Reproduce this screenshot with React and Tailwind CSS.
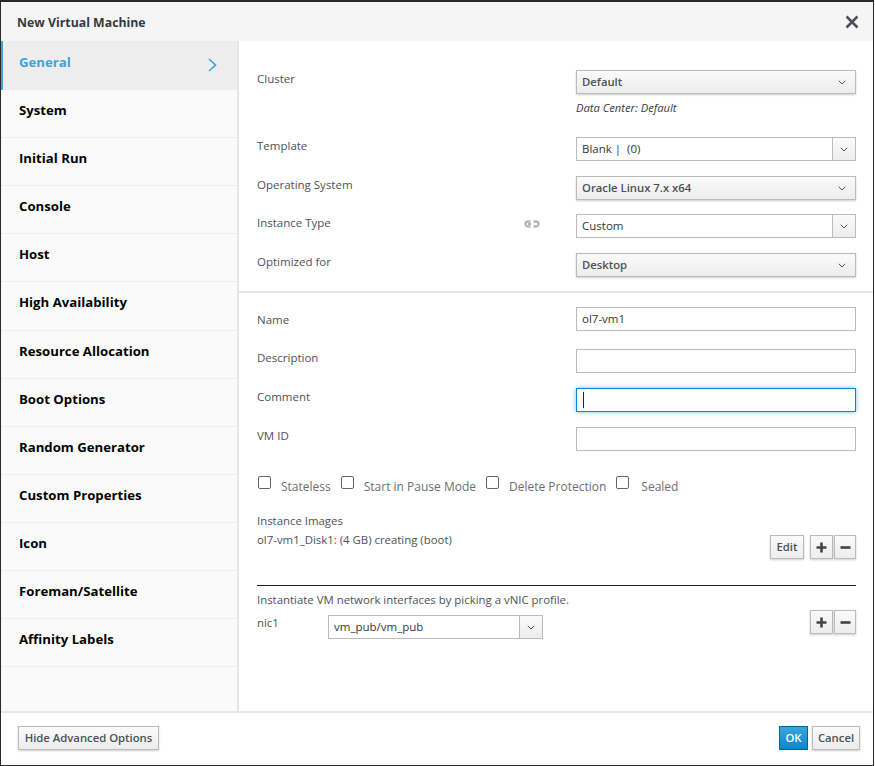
import React from "react";

const sideItems = [
  "System",
  "Initial Run",
  "Console",
  "Host",
  "High Availability",
  "Resource Allocation",
  "Boot Options",
  "Random Generator",
  "Custom Properties",
  "Icon",
  "Foreman/Satellite",
  "Affinity Labels",
];

const Caret = () => (
  <svg width="8" height="5" viewBox="0 0 8 5" fill="none" stroke="#4d5258" strokeWidth="1">
    <path d="M0.8 0.8 L4 4 L7.2 0.8" />
  </svg>
);

// plain gradient dropdown button
const SelectButton = ({ value }) => (
  <div className="flex h-6 w-[280px] items-center justify-between border border-[#bbbbbb] bg-gradient-to-b from-[#fafafa] to-[#ededed] pl-[5px] pr-[9px] text-[11.3px] font-semibold text-[#4d5258] shadow-[0_1px_2px_rgba(0,0,0,0.2)]">
    <span>{value}</span>
    <Caret />
  </div>
);

// text box with the small arrow button on the right
const Combo = ({ value, width }) => (
  <div className={`flex h-6 items-stretch border border-[#bbbbbb] bg-white text-[11.5px] text-[#363636] ${width}`}>
    <span className="flex flex-1 items-center whitespace-pre pl-[5px]">{value}</span>
    <span className="flex w-[23px] items-center justify-center border-l border-[#bbbbbb] bg-gradient-to-b from-[#fafafa] to-[#ededed]">
      <Caret />
    </span>
  </div>
);

const TextBox = ({ value }) => (
  <div className="flex h-6 w-[280px] items-center border border-[#bbbbbb] bg-white pl-[5px] text-[11.5px] text-[#363636]">
    {value}
  </div>
);

const Row = ({ label, children, extra, className, labelClass = "pt-[1px]" }) => (
  <div className={`flex ${className}`}>
    <span className={`w-[263px] text-[11.5px] leading-[16px] text-[#4d5258] ${labelClass}`}>{label}</span>
    <div className="flex w-[56px] justify-start pl-[4px]">{extra}</div>
    <div>{children}</div>
  </div>
);

const Check = ({ label, className, gap = "ml-[10px]" }) => (
  <label className={`flex items-start ${className}`}>
    <span className="mt-[1px] h-[13px] w-[13px] rounded-[2px] border border-[#666666] bg-white"></span>
    <span className={`${gap} mt-[4px] text-[12px] leading-[16px] text-[#6a6e73]`}>{label}</span>
  </label>
);

const SmallBtn = ({ children, className }) => (
  <div
    className={`flex h-6 items-center justify-center border border-[#bbbbbb] bg-gradient-to-b from-[#fafafa] to-[#ededed] text-[11.3px] font-semibold text-[#4d5258] shadow-[0_1px_2px_rgba(0,0,0,0.2)] ${className}`}
  >
    {children}
  </div>
);

const PlusIcon = () => (
  <svg width="11" height="11" viewBox="0 0 11 11" fill="#3f454c">
    <path d="M4.2 0.5h2.6v3.7h3.7v2.6H6.8v3.7H4.2V6.8H0.5V4.2h3.7z" />
  </svg>
);

const MinusIcon = () => (
  <svg width="11" height="11" viewBox="0 0 11 11" fill="#3f454c">
    <rect x="0.5" y="4.2" width="10" height="2.6" />
  </svg>
);

const PlusMinus = () => (
  <div className="flex gap-[1px]">
    <SmallBtn className="w-[23px]">
      <PlusIcon />
    </SmallBtn>
    <SmallBtn className="w-[22px]">
      <MinusIcon />
    </SmallBtn>
  </div>
);

const LinkIcon = () => (
  <svg className="mt-[6px]" width="16" height="8" viewBox="0 0 16 8" fill="none" stroke="#b5b8bb" strokeWidth="2.4">
    <path d="M6.5 1.5H4a2.5 2.5 0 0 0 0 5h2.5" />
    <path d="M9.5 1.5H12a2.5 2.5 0 0 1 0 5H9.5" />
    <path d="M4 4h3" />
  </svg>
);

const App = () => {
  return (
    <div className="h-[766px] w-[875px] bg-white font-['Open_Sans',sans-serif]">
      <div className="flex h-[766px] w-[874px] flex-col border border-t-2 border-[#2a2a2a] bg-white">
        <div className="flex h-[39px] items-center justify-between bg-[#f5f5f5] pl-4 pr-[14px]">
          <span className="mt-[3px] text-[12.3px] font-bold text-[#363b40]">New Virtual Machine</span>
          <svg width="14" height="14" viewBox="0 0 14 14" stroke="#4d5258" strokeWidth="2.6" fill="none">
            <path d="M1.5 1.5 L12.5 12.5 M12.5 1.5 L1.5 12.5" />
          </svg>
        </div>

        <div className="flex flex-1">
          <div className="w-[239px] border-r-2 border-[#e6e6e6] bg-[#fafafa]">
            <div className="flex h-[49px] items-start justify-between border-l-2 border-[#39a5dc] bg-[#ededed] pl-[16px] pr-[20px] pt-[12px]">
              <span className="text-[13.2px] font-bold leading-[18px] text-[#39a5dc]">General</span>
              <svg className="mt-[5px]" width="9" height="14" viewBox="0 0 9 14" fill="none" stroke="#39a5dc" strokeWidth="1.6">
                <path d="M1 1 L7.5 7 L1 13" />
              </svg>
            </div>
            {sideItems.map((item) => (
              <div
                key={item}
                className="flex h-[48px] items-center border-b border-[#ededed] pb-[8px] pl-[18px] text-[13.2px] font-bold leading-[18px] text-[#030303] nth-6:h-[49px]"
              >
                {item}
              </div>
            ))}
          </div>

          <div className="flex-1">
            <div className="pl-[18px] pt-[29px]">
              <Row label="Cluster">
                <SelectButton value="Default" />
                <p className="mt-[6px] text-[11.2px] italic leading-[16px] text-[#363b40]">Data Center: Default</p>
              </Row>
              <Row label="Template" className="mt-[21px]">
                <Combo value="Blank |  (0)" width="w-[280px]" />
              </Row>
              <Row label="Operating System" className="mt-[15px]">
                <SelectButton value="Oracle Linux 7.x x64" />
              </Row>
              <Row label="Instance Type" extra={<LinkIcon />} className="mt-[14px]">
                <Combo value="Custom" width="w-[280px]" />
              </Row>
              <Row label="Optimized for" className="mt-[15px]">
                <SelectButton value="Desktop" />
              </Row>
            </div>

            <div className="mt-[14px] h-[2px] w-full bg-[#e6e6e6]"></div>

            <div className="pl-[18px] pr-[17px] pt-[14px]">
              <Row label="Name" labelClass="pt-[5px]">
                <TextBox value="ol7-vm1" />
              </Row>
              <Row label="Description" className="mt-[18px]">
                <TextBox />
              </Row>
              <Row label="Comment" className="mt-[15px]">
                <div className="flex h-6 w-[280px] items-center border border-[#0088ce] bg-white pl-[6px] shadow-[0_0_5px_rgba(0,136,206,0.5)]">
                  <span className="h-[16px] w-[1px] bg-[#222222]"></span>
                </div>
              </Row>
              <Row label="VM ID" className="mt-[15px]">
                <TextBox />
              </Row>

              <div className="mt-[24px] flex pl-[1px]">
                <Check label="Stateless" />
                <Check label="Start in Pause Mode" className="ml-[10px]" />
                <Check label="Delete Protection" className="ml-[10px]" />
                <Check label="Sealed" className="ml-[10px]" gap="ml-[12px]" />
              </div>

              <div className="mt-[16px] flex items-start justify-between">
                <div className="text-[11.4px] leading-[19px] text-[#4d5258]">
                  <div>Instance Images</div>
                  <div>ol7-vm1_Disk1: (4 GB) creating (boot)</div>
                </div>
                <div className="mt-[24px] flex gap-[6px]">
                  <SmallBtn className="w-[34px]">Edit</SmallBtn>
                  <PlusMinus />
                </div>
              </div>

              <div className="mt-[26px] h-[1px] w-full bg-[#222222]"></div>

              <div className="flex items-start justify-between">
                <div>
                  <div className="mt-[6px] text-[11.4px] leading-[16px] text-[#4d5258]">
                    Instantiate VM network interfaces by picking a vNIC profile.
                  </div>
                  <div className="mt-[7px] flex">
                    <span className="w-[71px] text-[11.4px] leading-[16px] text-[#4d5258]">nic1</span>
                    <Combo value="vm_pub/vm_pub" width="w-[215px]" />
                  </div>
                </div>
                <div className="mt-[24px]">
                  <PlusMinus />
                </div>
              </div>
            </div>
          </div>
        </div>

        <div className="flex h-[54px] items-start justify-between border-t-2 border-[#e6e6e6] bg-white pl-[17px] pr-[13px] pt-[13px]">
          <SmallBtn className="w-[141px]">Hide Advanced Options</SmallBtn>
          <div className="flex gap-[4px]">
            <div className="flex h-6 w-[29px] items-center justify-center border border-[#00659c] bg-gradient-to-b from-[#39a5dc] to-[#0088ce] text-[11.3px] font-semibold text-white">
              OK
            </div>
            <SmallBtn className="w-[48px]">Cancel</SmallBtn>
          </div>
        </div>
      </div>
    </div>
  );
};

export default App;
